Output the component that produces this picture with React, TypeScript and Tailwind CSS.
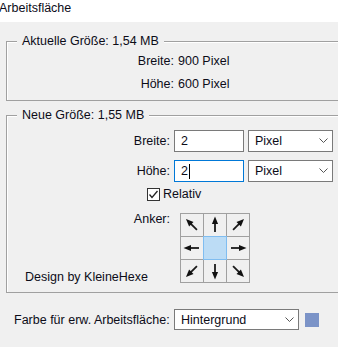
const anchors = [-45, 0, 45, -90, null, 90, -135, 180, 135]

function Arrow({ deg }: { deg: number }) {
  return (
    <svg width="22" height="22" viewBox="0 0 22 22">
      <g transform={`rotate(${deg} 11 11)`}>
        <line x1="11" y1="18" x2="11" y2="8" stroke="#1a1a1a" strokeWidth="1.8" />
        <polygon points="11,2.5 7.9,10 14.1,10" fill="#111" />
      </g>
    </svg>
  )
}

function Chevron() {
  return (
    <svg width="9" height="6" viewBox="0 0 9 6" className="shrink-0">
      <polyline points="0.5,0.5 4.5,4.5 8.5,0.5" fill="none" stroke="#555" strokeWidth="1" />
    </svg>
  )
}

function Select({ value, className }: { value: string; className: string }) {
  return (
    <div
      className={`flex items-center justify-between border border-[#7a7a7a] bg-white pl-[6px] pr-[4px] ${className}`}
    >
      <span>{value}</span>
      <Chevron />
    </div>
  )
}

export default function App() {
  return (
    <div className="w-[338px] h-[347px] overflow-hidden bg-[#f0f0f0] font-['Liberation_Sans',Arial,sans-serif] text-[12.5px] leading-[14px] text-[#0c0c18]">
      {/* Title */}
      <div className="h-[22px] bg-white pt-[1px] -ml-[1px]">Arbeitsfläche</div>

      {/* Aktuelle Größe */}
      <fieldset className="mt-[12px] ml-[6px] w-[350px] border border-[#a0a0a0] shadow-[inset_1px_1px_0_#fff] pt-[2px] pb-[4px]">
        <legend className="ml-[10px] px-[5px] bg-[#f0f0f0]">Aktuelle Größe: 1,54 MB</legend>
        <div className="grid grid-cols-[167px_auto] gap-x-[4px] leading-[23px]">
          <span className="text-right">Breite:</span>
          <span>900 Pixel</span>
          <span className="text-right">Höhe:</span>
          <span>600 Pixel</span>
        </div>
      </fieldset>

      {/* Neue Größe */}
      <fieldset className="mt-[7px] ml-[6px] w-[350px] border border-[#a0a0a0] shadow-[inset_1px_1px_0_#fff] pt-[8px] pb-[9px]">
        <legend className="ml-[10px] px-[5px] bg-[#f0f0f0]">Neue Größe: 1,55 MB</legend>

        <div className="flex items-center">
          <span className="w-[163px] text-right">Breite:</span>
          <div className="ml-[4px] w-[70px] h-[22px] border border-[#7a7a7a] bg-white pl-[6px] flex items-center">2</div>
          <Select value="Pixel" className="ml-[4px] w-[85px] h-[22px]" />
        </div>

        <div className="flex items-center mt-[8px]">
          <span className="w-[163px] text-right">Höhe:</span>
          <div className="ml-[4px] w-[70px] h-[22px] border border-[#0078d7] bg-white pl-[6px] flex items-center">
            2<span className="ml-px w-px h-[15px] bg-black" />
          </div>
          <Select value="Pixel" className="ml-[4px] w-[85px] h-[22px]" />
        </div>

        <div className="flex items-center mt-[5px] ml-[140px]">
          <div className="w-[13px] h-[13px] border border-[#333] bg-white flex items-center justify-center">
            <svg width="11" height="11" viewBox="0 0 11 11">
              <polyline points="1.5,5.5 4,8.5 9.5,2" fill="none" stroke="#222" strokeWidth="1.3" />
            </svg>
          </div>
          <span className="ml-[3px]">Relativ</span>
        </div>

        <div className="flex mt-[12px]">
          <div className="w-[163px] flex flex-col justify-between">
            <span className="text-right -mt-px">Anker:</span>
            <span className="pl-[18px] -mb-px">Design by KleineHexe</span>
          </div>
          <div className="ml-[10px] grid grid-cols-[22px_22px_22px] gap-px p-px bg-[#a0a0a0]">
            {anchors.map((deg, i) =>
              deg === null ? (
                <div key={i} className="w-[22px] h-[22px] bg-[#bcdcf5] outline outline-1 outline-[#80bdf0]" />
              ) : (
                <div key={i} className="w-[22px] h-[22px] bg-[#f0f0f0]">
                  <Arrow deg={deg} />
                </div>
              )
            )}
          </div>
        </div>
      </fieldset>

      {/* Farbe */}
      <div className="flex items-center mt-[16px] pl-[14px]">
        <span className="w-[160px]">Farbe für erw. Arbeitsfläche:</span>
        <Select value="Hintergrund" className="w-[125px] h-[21px]" />
        <div className="ml-[6px] w-[14px] h-[14px] bg-[#7b93c7]" />
      </div>
    </div>
  )
}
